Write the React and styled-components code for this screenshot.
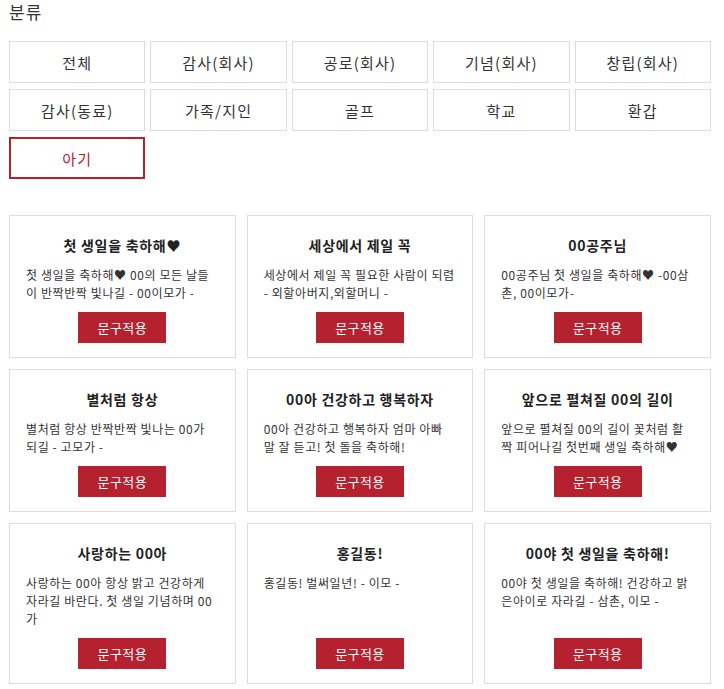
import React from 'react';
import styled, { createGlobalStyle } from 'styled-components';

const GlobalStyle = createGlobalStyle`
  body {
    margin: 0;
    background: #fff;
    font-family: "Noto Sans CJK KR", "Noto Sans", sans-serif;
  }
`;

const Page = styled.div`
  padding: 0 13px 0 9px;
`;

const Heading = styled.h3`
  margin: 0;
  font-size: 17px;
  font-weight: 400;
  line-height: 24px;
  letter-spacing: 1px;
  color: #333;
`;

const CategoryGrid = styled.div`
  display: grid;
  grid-template-columns: repeat(5, 1fr);
  gap: 6px 5px;
  margin-top: 17px;
`;

const CategoryButton = styled.button`
  height: 42px;
  background: #fff;
  border: ${(p) => (p.active ? '2px solid #b5202e' : '1px solid #dcdcdc')};
  color: ${(p) => (p.active ? '#b5202e' : '#333')};
  font-family: inherit;
  font-size: 15px;
  letter-spacing: 1.2px;
  cursor: pointer;
  padding: 0;
`;

const CardGrid = styled.div`
  display: grid;
  grid-template-columns: repeat(3, 1fr);
  gap: 11px;
  margin-top: 36px;
`;

const Card = styled.div`
  display: flex;
  flex-direction: column;
  border: 1px solid #dcdcdc;
  padding: 19px 16px 14px;
`;

const Title = styled.h4`
  margin: 0 0 11px;
  font-size: 14px;
  font-weight: 700;
  line-height: 20px;
  letter-spacing: 0.7px;
  text-align: center;
  color: #222;
`;

const Body = styled.p`
  margin: 0;
  font-size: 12px;
  line-height: 18px;
  letter-spacing: 0.6px;
  color: #333;
`;

const ApplyButton = styled.button`
  align-self: center;
  margin-top: auto;
  width: 88px;
  height: 31px;
  border: none;
  background: #b5212e;
  color: #fff;
  font-family: inherit;
  font-size: 13px;
  letter-spacing: 0.4px;
  cursor: pointer;
`;

const Spacer = styled.div`
  height: 10px;
  flex-shrink: 0;
`;

const categories = [
  '전체', '감사(회사)', '공로(회사)', '기념(회사)', '창립(회사)',
  '감사(동료)', '가족/지인', '골프', '학교', '환갑', '아기',
];

const phrases = [
  { title: '첫 생일을 축하해♥', text: '첫 생일을 축하해♥ 00의 모든 날들이 반짝반짝 빛나길 - 00이모가 -' },
  { title: '세상에서 제일 꼭', text: '세상에서 제일 꼭 필요한 사람이 되렴 - 외할아버지,외할머니 -' },
  { title: '00공주님', text: '00공주님 첫 생일을 축하해♥ -00삼촌, 00이모가-' },
  { title: '별처럼 항상', text: '별처럼 항상 반짝반짝 빛나는 00가 되길 - 고모가 -' },
  { title: '00아 건강하고 행복하자', text: '00아 건강하고 행복하자 엄마 아빠 말 잘 듣고! 첫 돌을 축하해!' },
  { title: '앞으로 펼쳐질 00의 길이', text: '앞으로 펼쳐질 00의 길이 꽃처럼 활짝 피어나길 첫번째 생일 축하해♥' },
  { title: '사랑하는 00아', text: '사랑하는 00아 항상 밝고 건강하게 자라길 바란다. 첫 생일 기념하며 00가' },
  { title: '홍길동!', text: '홍길동! 벌써일년! - 이모 -' },
  { title: '00야 첫 생일을 축하해!', text: '00야 첫 생일을 축하해! 건강하고 밝은아이로 자라길 - 삼촌, 이모 -' },
];

export default function App() {
  return (
    <Page>
      <GlobalStyle />
      <Heading>분류</Heading>
      <CategoryGrid>
        {categories.map((c) => (
          <CategoryButton key={c} active={c === '아기'}>{c}</CategoryButton>
        ))}
      </CategoryGrid>
      <CardGrid>
        {phrases.map((p, i) => (
          <Card key={i}>
            <Title>{p.title}</Title>
            <Body>{p.text}</Body>
            <Spacer />
            <ApplyButton>문구적용</ApplyButton>
          </Card>
        ))}
      </CardGrid>
    </Page>
  );
}
